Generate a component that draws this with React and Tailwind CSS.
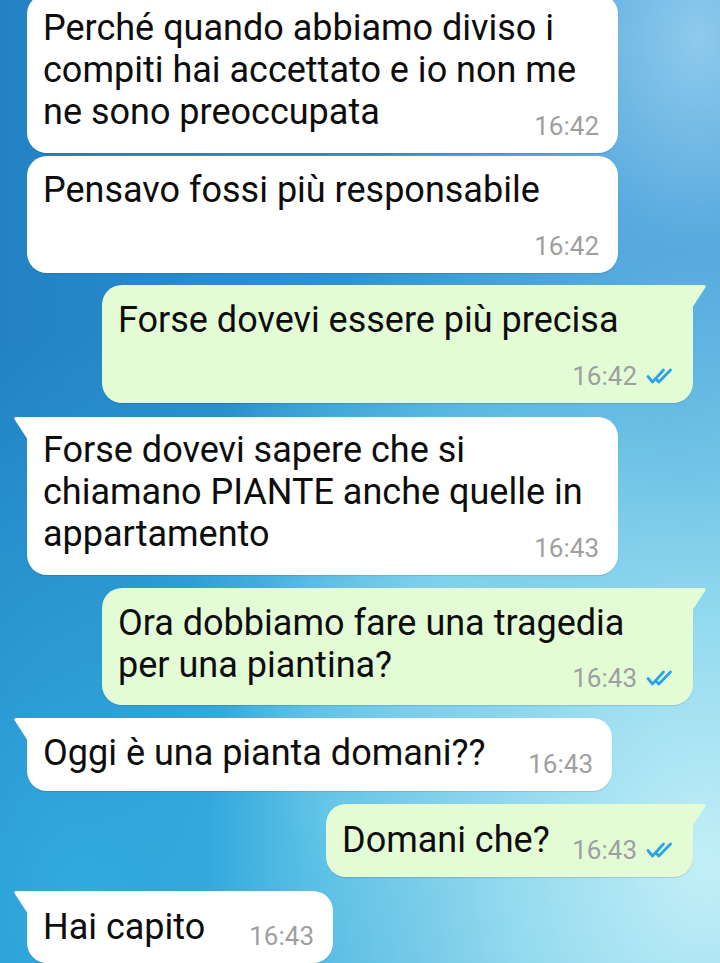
import React from 'react';

const messages = [
  {
    side: 'in',
    lines: ['Perché quando abbiamo diviso i', 'compiti hai accettato e io non me', 'ne sono preoccupata'],
    time: '16:42',
    box: 'w-[591px] -mt-[6px] pt-[13px]',
    timeRow: '-mt-[22px]',
  },
  {
    side: 'in',
    lines: ['Pensavo fossi più responsabile'],
    time: '16:42',
    box: 'w-[591px] mt-[3px] pt-[13px]',
    timeRow: 'mt-[20px]',
  },
  {
    side: 'out',
    tail: true,
    lines: ['Forse dovevi essere più precisa'],
    time: '16:42',
    box: 'w-[591px] mt-[12px] pt-[14px]',
    timeRow: 'mt-[20px]',
  },
  {
    side: 'in',
    tail: true,
    lines: ['Forse dovevi sapere che si', 'chiamano PIANTE anche quelle in', 'appartamento'],
    time: '16:43',
    box: 'w-[591px] mt-[14px] pt-[12px]',
    timeRow: '-mt-[22px]',
  },
  {
    side: 'out',
    tail: true,
    lines: ['Ora dobbiamo fare una tragedia', 'per una piantina?'],
    time: '16:43',
    box: 'w-[591px] mt-[13px] pt-[14px]',
    timeRow: '-mt-[23px]',
  },
  {
    side: 'in',
    tail: true,
    lines: ['Oggi è una pianta domani??'],
    time: '16:43',
    box: 'w-[585px] mt-[13px] pt-[14px]',
    timeRow: '-mt-[25px]',
  },
  {
    side: 'out',
    tail: true,
    lines: ['Domani che?'],
    time: '16:43',
    box: 'w-[367px] mt-[13px] pt-[15px]',
    timeRow: '-mt-[26px]',
  },
  {
    side: 'in',
    tail: true,
    lines: ['Hai capito'],
    time: '16:43',
    box: 'w-[306px] mt-[14px] pt-[15px]',
    timeRow: '-mt-[27px]',
  },
];

const DoubleCheck = () => (
  <svg width="30" height="16" viewBox="0 0 30 16" fill="none" stroke="#2ba3e6" strokeWidth="2.8" strokeLinecap="round" strokeLinejoin="round">
    <path d="M2 8.5 L6.5 14 L17.5 2" />
    <path d="M11 12 L12.8 14 L24.5 2" />
  </svg>
);

const Tail = ({ side }) =>
  side === 'in' ? (
    <svg className="absolute top-0 -left-[14px]" width="15" height="23" viewBox="0 0 15 23">
      <path d="M15 0 L3.5 0 Q0 0 2 3 L15 23 Z" fill="#ffffff" />
    </svg>
  ) : (
    <svg className="absolute top-0 -right-[14px]" width="15" height="23" viewBox="0 0 15 23">
      <path d="M0 0 L11.5 0 Q15 0 13 3 L0 23 Z" fill="#e3fcd6" />
    </svg>
  );

const Time = ({ side, time }) => (
  <div className="flex items-center gap-[9px]">
    <span className="text-[26px] leading-[30px] text-[#9f9f9f]">{time}</span>
    {side === 'out' && <DoubleCheck />}
  </div>
);

const Bubble = ({ msg }) => {
  const isIn = msg.side === 'in';
  const shape = isIn
    ? `self-start ml-[27px] bg-white pl-[16px] pr-[19px] ${msg.tail ? 'rounded-[20px] rounded-tl-none' : 'rounded-[20px]'}`
    : `self-end mr-[27px] bg-[#e3fcd6] pl-[16px] pr-[17px] ${msg.tail ? 'rounded-[20px] rounded-tr-none' : 'rounded-[20px]'}`;

  return (
    <div className={`relative pb-[12px] shadow-[0_1px_1px_rgba(0,0,0,0.12)] ${shape} ${msg.box}`}>
      {msg.tail && <Tail side={msg.side} />}
      <div className="text-[36px] leading-[42px] text-[#0d0d0d]">
        {msg.lines.map((l, i) => (
          <div key={i} className="whitespace-nowrap">{l}</div>
        ))}
      </div>
      <div className={`flex justify-end ${msg.timeRow}`}>
        <Time side={msg.side} time={msg.time} />
      </div>
    </div>
  );
};

export default function App() {
  return (
    <div className="w-[720px] h-[963px] overflow-hidden font-['Roboto',sans-serif] bg-[radial-gradient(ellipse_at_98%_90%,#c3eff7_0%,#93daef_20%,transparent_50%),radial-gradient(ellipse_at_97%_4%,#8ecaec_0%,#5aabdf_15%,transparent_34%),radial-gradient(ellipse_at_62%_60%,#6ccaea_0%,transparent_40%),radial-gradient(ellipse_at_12%_95%,#32ace0_0%,transparent_45%),radial-gradient(ellipse_at_45%_85%,#45bae2_0%,transparent_40%),linear-gradient(to_right,#2282c4,#2f93d0_50%,#42a6da)]">
      <div className="flex flex-col">
        {messages.map((m, i) => (
          <Bubble key={i} msg={m} />
        ))}
      </div>
    </div>
  );
}
